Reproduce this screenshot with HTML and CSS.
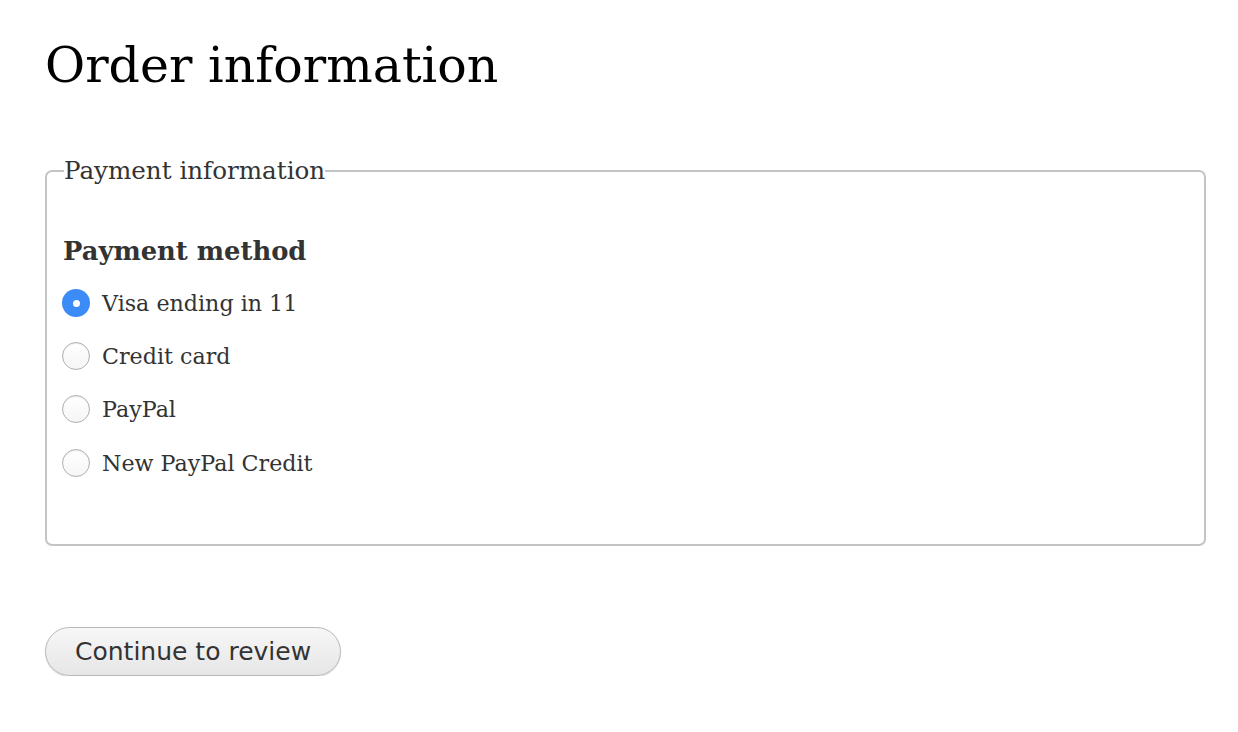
FILE: index.html
```html
<!DOCTYPE html>
<html>
<head>
<meta charset="utf-8">
<link rel="stylesheet" href="styles.css">
</head>
<body>
<main class="page">
  <h1 class="title">Order information</h1>
  <fieldset class="panel">
    <legend class="panel-legend">Payment information</legend>
    <div class="method-label">Payment method</div>
    <div class="options">
      <label class="option"><span class="radio radio-checked"></span><span class="option-text">Visa ending in 11</span></label>
      <label class="option"><span class="radio"></span><span class="option-text">Credit card</span></label>
      <label class="option"><span class="radio"></span><span class="option-text">PayPal</span></label>
      <label class="option"><span class="radio"></span><span class="option-text">New PayPal Credit</span></label>
    </div>
  </fieldset>
  <button class="btn" type="button">Continue to review</button>
</main>
</body>
</html>
```
FILE: styles.css
```css
html, body {
  margin: 0;
  padding: 0;
  background: #fff;
}
.page {
  padding: 0 32px 0 45px;
  font-family: "DejaVu Serif", Georgia, serif;
  color: #333;
}
.title {
  margin: 0;
  padding-top: 34px;
  font-size: 49px;
  font-weight: normal;
  color: #000;
  line-height: 64px;
}
.panel {
  margin: 58px 0 0 0;
  padding: 50px 16px 55px 15px;
  border: 2px solid #c4c4c4;
  border-radius: 7px;
  min-width: 0;
}
.panel-legend {
  padding: 0;
  margin-left: 2px;
  font-size: 24.6px;
  line-height: 30px;
  color: #333;
}
.method-label {
  margin-left: 1px;
  font-size: 25.8px;
  font-weight: bold;
  line-height: 30px;
  margin-bottom: 10px;
}
.options {
  display: flex;
  flex-direction: column;
}
.option {
  display: flex;
  align-items: center;
  gap: 12px;
  height: 53.3px;
}
.option-text {
  font-size: 22.2px;
}
.radio {
  box-sizing: border-box;
  width: 28px;
  height: 28px;
  border-radius: 50%;
  border: 1px solid #b0b0b0;
  background: linear-gradient(#fff, #f6f6f6);
  box-shadow: inset 0 1px 1px rgba(0,0,0,0.08);
  flex: none;
}
.radio-checked {
  border: none;
  background: #3b8cf6;
  position: relative;
  box-shadow: none;
}
.radio-checked::after {
  content: "";
  position: absolute;
  left: 11px;
  top: 11px;
  width: 7px;
  height: 7px;
  border-radius: 50%;
  background: #fff;
}
.btn {
  margin-top: 81px;
  height: 49px;
  padding: 0 29px;
  border: 1px solid #b8b8b8;
  border-radius: 25px;
  background: linear-gradient(#f7f7f7, #e6e6e6);
  box-shadow: 0 1px 1px rgba(0,0,0,0.15);
  font-family: "DejaVu Sans", "Lucida Grande", sans-serif;
  font-size: 25px;
  color: #333;
}
```
